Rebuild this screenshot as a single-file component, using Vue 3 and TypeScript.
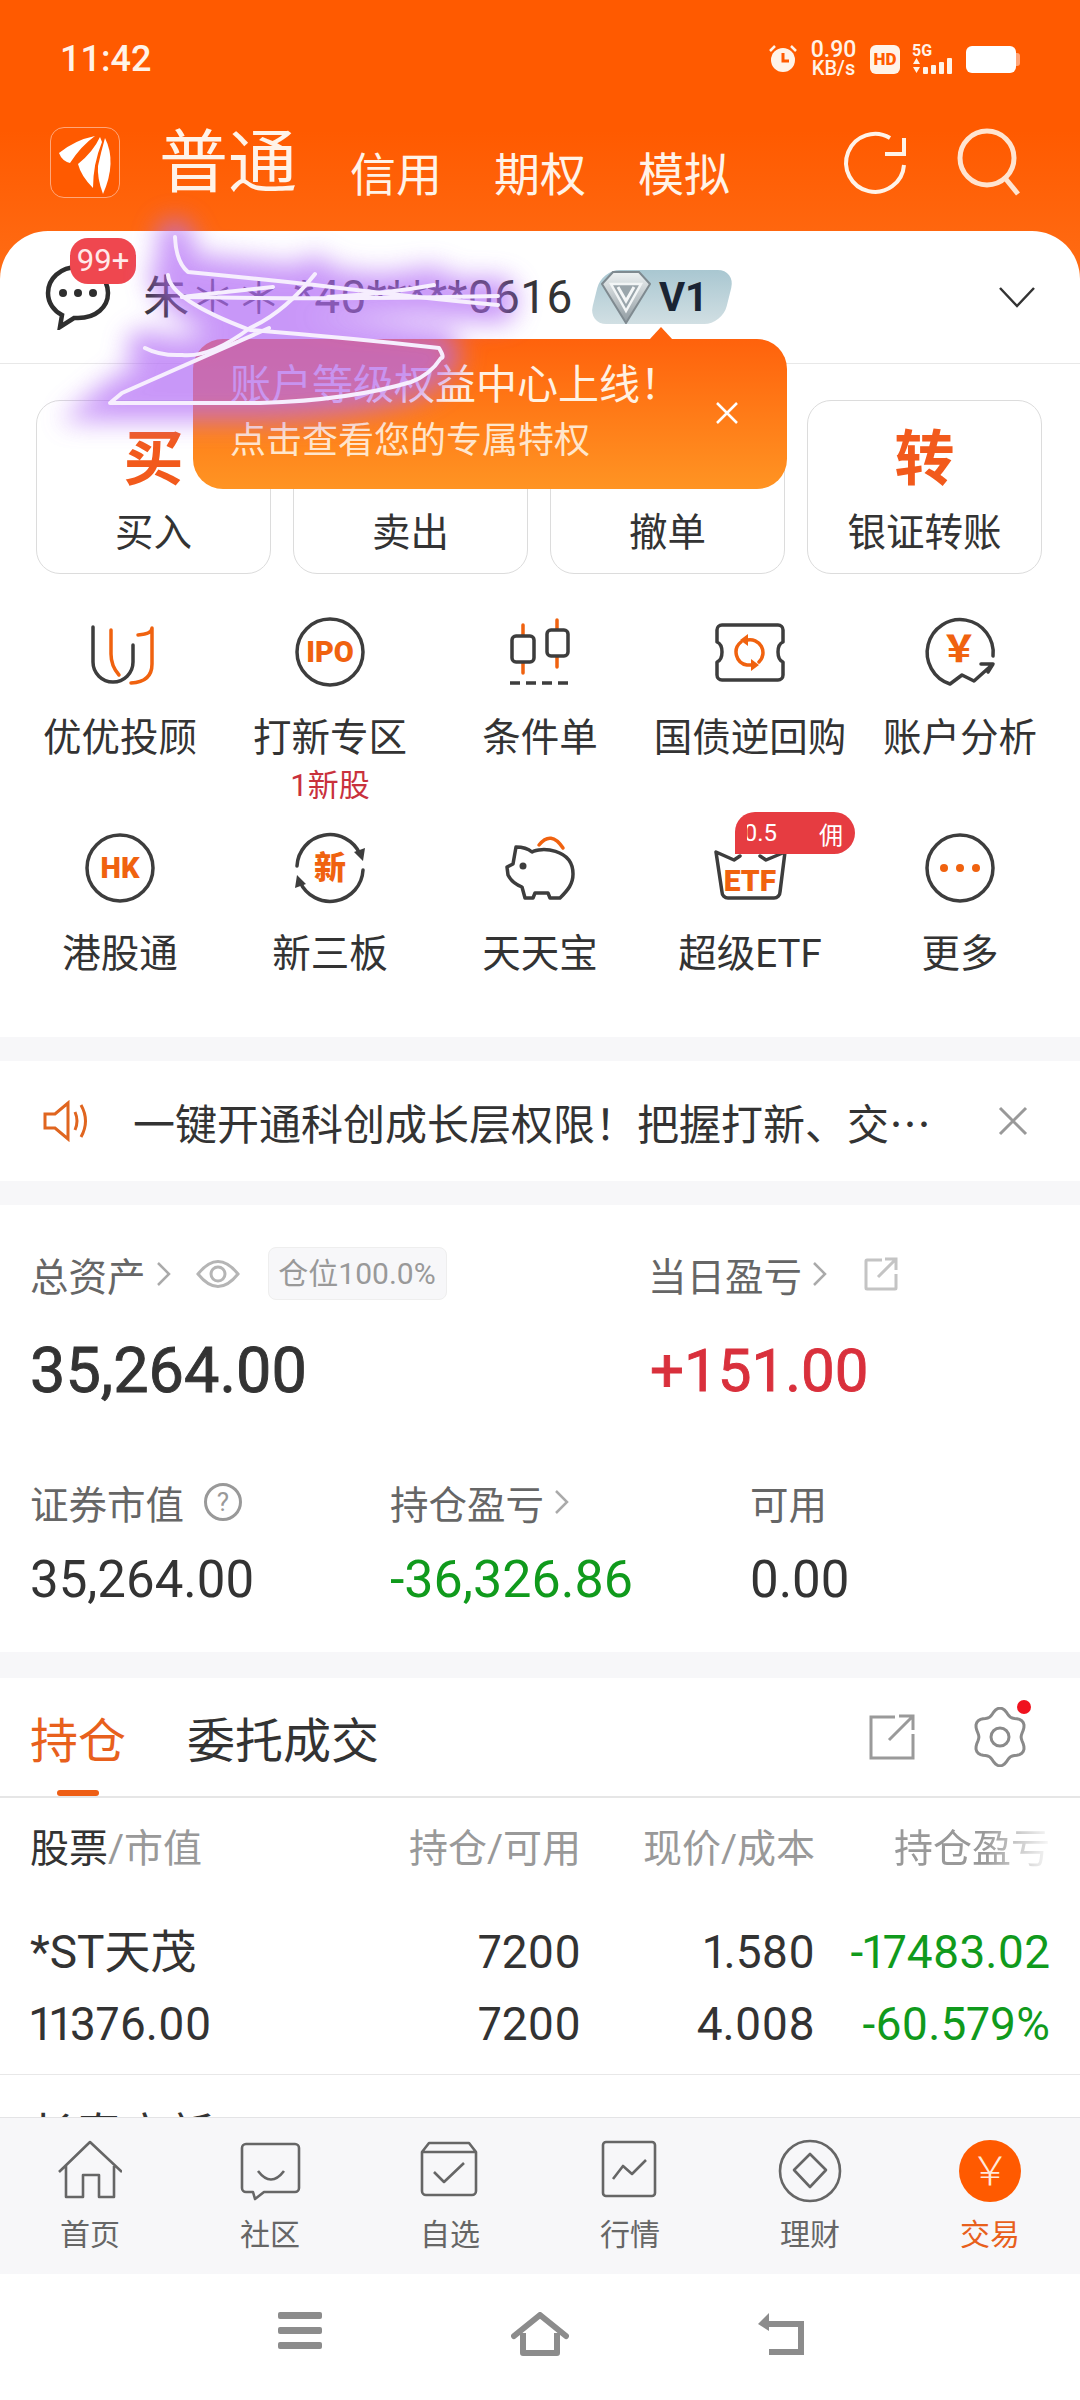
<script setup lang="ts">
const ink = 'stroke="#3d3d3d" stroke-width="3.5" fill="none" stroke-linecap="round" stroke-linejoin="round"'
const hot = 'stroke="#f0620f" stroke-width="3.5" fill="none" stroke-linecap="round" stroke-linejoin="round"'
const bold = 'fill="#f0620f" font-family="Roboto, Noto Sans CJK SC, sans-serif" font-weight="900" text-anchor="middle"'

const icons: Record<string, string> = {
  uu: `<path ${ink} d="M13 15V50a20 20 0 0 0 40 0V33"/><path ${hot} d="M31 18V42Q31 54 39 63"/><path ${hot} d="M58 23Q72 22 72 16V52Q72 70 51 71"/>`,
  ipo: `<circle ${ink} cx="40" cy="40" r="33"/><text ${bold} x="40" y="50" font-size="29">IPO</text>`,
  candle: `<path ${hot} d="M23 13V61M57 8V55"/><rect x="12" y="24" width="22" height="26" rx="4" fill="#fff" stroke="#3d3d3d" stroke-width="3.5"/><rect x="47" y="18" width="21" height="26" rx="4" fill="#fff" stroke="#3d3d3d" stroke-width="3.5"/><path stroke="#3d3d3d" stroke-width="3.5" d="M10 71H70" stroke-dasharray="10 6"/>`,
  ticket: `<path ${ink} d="M12 13H68a5 5 0 0 1 5 5v12q-5 2 -5 10t5 10v13a5 5 0 0 1-5 5H12a5 5 0 0 1-5-5V50q5-2 5-10t-5-10V18a5 5 0 0 1 5-5z"/><path ${hot} stroke-width="5" d="M31 30A13 13 0 0 0 37 53H42M49 50A13 13 0 0 0 37 28"/><path fill="#f0620f" d="M41 47L49 53L41 59ZM38 22L30 28L38 34Z"/>`,
  yen: `<path ${ink} d="M73 44A33 33 0 1 0 30 72L42 63L54 69L73 52H61M73 52L68 60"/><text ${bold} x="39" y="50" font-size="36" font-family="Noto Sans CJK SC">￥</text>`,
  hk: `<circle ${ink} cx="40" cy="40" r="33"/><text ${bold} x="40" y="50" font-size="29">HK</text>`,
  xin: `<path ${ink} d="M7 38A33 33 0 0 1 70 26M73 42A33 33 0 0 1 10 54"/><path fill="#3d3d3d" d="M64 24L75 20L73 33ZM16 56L5 60L7 47Z"/><text ${bold} x="40" y="51" font-size="32">新</text>`,
  pig: `<path ${hot} d="M39 17Q51 2 63 20"/><path ${ink} d="M16 19Q26 19 32 24C40 19 73 20 73 46C73 56 68 62 60 70H50L48 65H35L33 70H25L22 59Q12 55 8 47L7 39L13 36Z"/><circle cx="23" cy="38" r="3.5" fill="#3d3d3d"/>`,
  etf: `<path ${ink} d="M30 28L24 32L6 24L12 64a6 6 0 0 0 6 6H64a6 6 0 0 0 6-6L75 24L56 32L50 28"/><text ${bold} x="40" y="63" font-size="30">ETF</text>`,
  more: `<circle ${ink} cx="40" cy="40" r="33"/><circle cx="24" cy="40" r="4" fill="#f0620f"/><circle cx="40" cy="40" r="4" fill="#f0620f"/><circle cx="56" cy="40" r="4" fill="#f0620f"/>`
}

const actions = [
  { big: '买', label: '买入' },
  { big: '卖', label: '卖出' },
  { big: '撤', label: '撤单' },
  { big: '转', label: '银证转账' }
]

const tools = [
  { icon: 'uu', label: '优优投顾' },
  { icon: 'ipo', label: '打新专区', sub: '1新股' },
  { icon: 'candle', label: '条件单' },
  { icon: 'ticket', label: '国债逆回购' },
  { icon: 'yen', label: '账户分析' },
  { icon: 'hk', label: '港股通' },
  { icon: 'xin', label: '新三板' },
  { icon: 'pig', label: '天天宝' },
  { icon: 'etf', label: '超级ETF', tag: true },
  { icon: 'more', label: '更多' }
]

const rows = [
  { name: '*ST天茂', value: '11376.00', hold: '7200', free: '7200', price: '1.580', cost: '4.008', pnl: '-17483.02', pct: '-60.579%' },
  { name: '长春高新', value: '', hold: '100', free: '', price: '104.000', cost: '', pnl: '-8774.00', pct: '' }
]

const tabs = [
  { label: '首页', icon: '<path d="M1 33L32 3L64 33M8 27V58H25V36H41V58H56V27"/>' },
  { label: '社区', icon: '<path d="M8 5H57a4 4 0 0 1 4 4V49a4 4 0 0 1-4 4H26L17 60L15 53H8a4 4 0 0 1-4-4V9a4 4 0 0 1 4-4Z"/><path d="M20 32Q33 49 46 32"/>' },
  { label: '自选', icon: '<path d="M4 13L11 4H51L58 13V52a4 4 0 0 1-4 4H8a4 4 0 0 1-4-4ZM4 13H58"/><path d="M16 33L26 43L46 24"/>' },
  { label: '行情', icon: '<rect x="5" y="3" width="52" height="54" rx="3"/><path d="M15 40L25 27L34 35L48 21"/>' },
  { label: '理财', icon: '<circle cx="32" cy="32" r="30"/><path d="M32 15L48 31L32 48L16 31Z"/>' }
]

// wavy outline of the settings gear
function gearPath(): string {
  const pts: string[] = []
  for (let i = 0; i < 72; i++) {
    const a = (i / 72) * Math.PI * 2
    const r = 23.5 + 2.8 * Math.cos(a * 6)
    pts.push(`${(30 + r * 1.02 * Math.sin(a)).toFixed(1)} ${(30 - r * 1.1 * Math.cos(a)).toFixed(1)}`)
  }
  return `M${pts.join('L')}Z`
}

const scribble = [
  'M175 237Q176 262 188 272Q250 278 315 285Q420 298 498 305',
  'M182 297Q340 300 498 296',
  'M273 287Q225 292 182 297',
  'M315 274Q285 312 250 328Q210 358 182 355Q160 356 145 348',
  'M434 285Q385 294 328 297',
  'M168 275Q170 300 250 330Q350 338 439 348Q445 358 441 358Q430 375 411 382Q351 400 260 403H110L122 393L269 328'
]
</script>

<template>
  <div class="page">
    <div class="scroll">
      <div class="hero">
        <div class="status">
          <span class="time">11:42</span>
          <div class="status-right">
            <svg width="30" height="30" viewBox="0 0 30 30">
              <circle cx="15" cy="16" r="12" fill="#fff3e8" />
              <path d="M15 9V17H21" stroke="#ff5a00" stroke-width="3" fill="none" />
              <path d="M2 7L7 2M28 7L23 2" stroke="#fff3e8" stroke-width="2.5" />
            </svg>
            <div class="speed"><span>0.90</span><span class="speed-unit">KB/s</span></div>
            <span class="hd">HD</span>
            <div class="signal">
              <span class="five-g">5G</span>
              <div class="bars">
                <svg width="9" height="17" viewBox="0 0 9 17" fill="#fff3e8"><path d="M4.5 1L8 7H1ZM1 10H8L4.5 16Z" /></svg>
                <i /><i /><i /><i />
              </div>
            </div>
            <div class="battery"><i /></div>
          </div>
        </div>

        <div class="nav">
          <div class="logo">
            <svg width="68" height="70" viewBox="0 0 68 70" fill="#fff">
              <path d="M8 25Q24 12 44 8Q30 18 19 35Q11 33 8 25Z" />
              <path d="M49 9Q42 24 27 36Q30 48 42 60Q42 36 51 14Z" />
              <path d="M54 10Q66 34 52 66Q46 50 47 38Q50 24 54 10Z" />
            </svg>
          </div>
          <span class="nav-main">普通</span>
          <div class="nav-tabs">
            <span>信用</span>
            <span>期权</span>
            <span>模拟</span>
          </div>
          <div class="nav-icons">
            <svg width="70" height="70" viewBox="0 0 70 70" fill="none" stroke="#fff3e8" stroke-width="4">
              <path d="M50 10A29 29 0 1 0 64 37" />
              <path d="M64 10V26H45" />
            </svg>
            <svg width="66" height="70" viewBox="0 0 66 70" fill="none" stroke="#ffe4d0" stroke-width="5">
              <circle cx="31" cy="30" r="27" />
              <path d="M49 50L62 66" />
            </svg>
          </div>
        </div>

        <div class="account">
          <div class="chat">
            <svg width="66" height="66" viewBox="0 0 66 66" fill="none" stroke="#2e2e2e" stroke-width="4.5">
              <path d="M33 3C15 3 3 15 3 29C3 39 9 47 17 51L15 63L29 54H33C51 54 63 43 63 29C63 15 51 3 33 3Z" />
              <circle cx="18" cy="29" r="4" fill="#2e2e2e" stroke="none" />
              <circle cx="33" cy="29" r="4" fill="#2e2e2e" stroke="none" />
              <circle cx="48" cy="29" r="4" fill="#2e2e2e" stroke="none" />
            </svg>
            <span class="chat-badge">99+</span>
          </div>
          <span class="acct-name">朱＊＊ *40*****0616</span>
          <div class="level">
            <svg width="50" height="54" viewBox="0 0 50 54">
              <defs>
                <linearGradient id="gem" x1="0" y1="0" x2="0" y2="1">
                  <stop offset="0" stop-color="#eef2f3" />
                  <stop offset="1" stop-color="#8f9aa0" />
                </linearGradient>
              </defs>
              <path d="M12 2H38L49 14L25 53L1 14Z" fill="url(#gem)" stroke="#7f8a90" stroke-width="2" />
              <path d="M10 14H40L25 41Z" fill="#9aa5ab" stroke="#f2f5f6" stroke-width="2.5" />
              <path d="M17 17L25 31L33 17" fill="none" stroke="#f4f6f7" stroke-width="3" />
            </svg>
            <span>V1</span>
          </div>
          <svg class="chevron" width="38" height="24" viewBox="0 0 38 24" fill="none" stroke="#333" stroke-width="2.5">
            <path d="M2 3L19 21L36 3" />
          </svg>
        </div>
      </div>

      <div class="actions">
        <div v-for="a in actions" :key="a.label" class="action">
          <span class="action-big">{{ a.big }}</span>
          <span class="action-label">{{ a.label }}</span>
        </div>
      </div>

      <div class="tools">
        <div v-for="t in tools" :key="t.label" class="tool">
          <svg width="80" height="80" viewBox="0 0 80 80" v-html="icons[t.icon]" />
          <span class="tool-label">{{ t.label }}</span>
          <span v-if="t.sub" class="tool-sub">{{ t.sub }}</span>
          <div v-if="t.tag" class="tool-tag">
            <span class="tool-tag-num">0.5</span>
            <span>佣</span>
          </div>
        </div>
      </div>

      <div class="gap" />

      <div class="notice">
        <svg width="48" height="42" viewBox="0 0 48 42" fill="none" stroke="#e0651f" stroke-width="3">
          <path d="M2 14H12L25 3V39L12 28H2Z" />
          <path d="M32 12Q36 21 32 30M38 5Q47 21 38 37" />
        </svg>
        <span class="notice-text">一键开通科创成长层权限！把握打新、交…</span>
        <svg width="30" height="30" viewBox="0 0 30 30" stroke="#999" stroke-width="3">
          <path d="M2 2L28 28M28 2L2 28" />
        </svg>
      </div>

      <div class="gap" />

      <div class="assets">
        <div class="assets-top">
          <div class="a-label">
            <span>总资产</span>
            <svg class="arrow" width="16" height="26" viewBox="0 0 16 26" fill="none" stroke="#aaa" stroke-width="2.5"><path d="M2 2L13 13L2 24" /></svg>
            <svg class="eye" width="44" height="34" viewBox="0 0 44 34" fill="none" stroke="#b5b5b5" stroke-width="3">
              <path d="M2 17Q22 -8 42 17Q22 42 2 17Z" />
              <circle cx="22" cy="17" r="7" />
            </svg>
            <span class="ratio">仓位100.0%</span>
          </div>
          <div class="a-label">
            <span>当日盈亏</span>
            <svg class="arrow" width="16" height="26" viewBox="0 0 16 26" fill="none" stroke="#aaa" stroke-width="2.5"><path d="M2 2L13 13L2 24" /></svg>
            <svg class="share" width="34" height="34" viewBox="0 0 34 34" fill="none" stroke="#c4c4c4" stroke-width="3">
              <path d="M18 3H3A1 1 0 0 0 2 4V31A1 1 0 0 0 3 32H31A1 1 0 0 0 32 31V17" />
              <path d="M14 20L32 2M21 2H32V13" />
            </svg>
          </div>
          <div class="a-big">35,264.00</div>
          <div class="a-big red">+151.00</div>
        </div>
        <div class="assets-bottom">
          <div class="a-label">
            <span>证券市值</span>
            <span class="help">?</span>
          </div>
          <div class="a-label">
            <span>持仓盈亏</span>
            <svg class="arrow" width="16" height="26" viewBox="0 0 16 26" fill="none" stroke="#aaa" stroke-width="2.5"><path d="M2 2L13 13L2 24" /></svg>
          </div>
          <div class="a-label"><span>可用</span></div>
          <div class="a-mid">35,264.00</div>
          <div class="a-mid green">-36,326.86</div>
          <div class="a-mid">0.00</div>
        </div>
      </div>

      <div class="gap gap-tall" />

      <div class="hold-tabs">
        <span class="hold-tab on">持仓</span>
        <span class="hold-tab">委托成交</span>
        <svg class="hold-share" width="46" height="46" viewBox="0 0 46 46" fill="none" stroke="#9a9a9a" stroke-width="3">
          <path d="M26 3H2V44H44V20" />
          <path d="M20 26L44 2M30 2H44V16" />
        </svg>
        <div class="gear">
          <svg width="60" height="60" viewBox="0 0 60 60" fill="none" stroke="#8a8a8a" stroke-width="3">
            <path :d="gearPath()" />
            <circle cx="30" cy="30" r="9" />
          </svg>
          <i class="gear-dot" />
        </div>
      </div>

      <div class="table-head">
        <span><b>股票</b>/市值</span>
        <span class="num">持仓/可用</span>
        <span class="num">现价/成本</span>
        <span class="num fade">持仓盈亏</span>
      </div>
      <div v-for="r in rows" :key="r.name" class="table-row">
        <span>{{ r.name }}</span>
        <span class="num">{{ r.hold }}</span>
        <span class="num">{{ r.price }}</span>
        <span class="num green">{{ r.pnl }}</span>
        <span>{{ r.value }}</span>
        <span class="num">{{ r.free }}</span>
        <span class="num">{{ r.cost }}</span>
        <span class="num green">{{ r.pct }}</span>
      </div>
    </div>

    <div class="tabbar">
      <div v-for="t in tabs" :key="t.label" class="tabbar-item">
        <svg width="64" height="64" viewBox="0 0 64 64" fill="none" stroke="#666" stroke-width="2.6" stroke-linejoin="round" v-html="t.icon" />
        <span>{{ t.label }}</span>
      </div>
      <div class="tabbar-item active">
        <svg width="64" height="64" viewBox="0 0 64 64">
          <circle cx="32" cy="32" r="31" fill="#ff5a00" />
          <text x="32" y="46" fill="#ffe9dc" font-size="40" font-weight="300" text-anchor="middle" font-family="Noto Sans CJK SC, sans-serif">￥</text>
        </svg>
        <span>交易</span>
      </div>
    </div>

    <div class="sysbar">
      <div class="sys-cell">
        <svg width="46" height="38" viewBox="0 0 46 38" fill="#8c8c8c">
          <rect x="1" y="0" width="44" height="7" rx="2" />
          <rect x="1" y="15" width="44" height="7" rx="2" />
          <rect x="1" y="30" width="44" height="7" rx="2" />
        </svg>
      </div>
      <div class="sys-cell">
        <svg width="58" height="44" viewBox="0 0 58 44" fill="none" stroke="#8c8c8c" stroke-width="6" stroke-linejoin="round">
          <path d="M3 24L29 3L55 24" stroke-linecap="round" />
          <path d="M12 21V41H46V21" />
        </svg>
      </div>
      <div class="sys-cell">
        <svg width="50" height="44" viewBox="0 0 50 44" fill="none" stroke="#8c8c8c" stroke-width="6">
          <path d="M8 12H46V40H14" />
          <path d="M14 1L3 12L14 19Z" fill="#8c8c8c" stroke="none" />
        </svg>
      </div>
    </div>

    <div class="tip">
      <div class="tip-title">账户等级权益中心上线！</div>
      <div class="tip-sub">点击查看您的专属特权</div>
      <svg class="tip-close" width="24" height="24" viewBox="0 0 24 24" stroke="#fff" stroke-width="2.5">
        <path d="M2 2L22 22M22 2L2 22" />
      </svg>
    </div>

    <svg class="scribble" width="1080" height="640" viewBox="0 0 1080 640" fill="none">
      <defs>
        <filter id="glow" x="-30%" y="-30%" width="160%" height="160%">
          <feGaussianBlur stdDeviation="13" />
        </filter>
      </defs>
      <g filter="url(#glow)" stroke="#b26cf6" stroke-width="36" opacity="0.7" stroke-linecap="round">
        <path v-for="d in scribble" :key="d" :d="d" />
        <path :d="scribble[5]" fill="#b26cf6" />
      </g>
      <g stroke="#f6eefe" stroke-width="4" stroke-linecap="round" stroke-linejoin="round">
        <path v-for="d in scribble" :key="d" :d="d" />
      </g>
    </svg>
  </div>
</template>

<style scoped>
.page {
  position: relative;
  width: 1080px;
  height: 2400px;
  display: flex;
  flex-direction: column;
  overflow: hidden;
  background: #fff;
  color: #333;
  font-family: Roboto, "Noto Sans CJK SC", sans-serif;
}

.scroll {
  flex: 1;
  min-height: 0;
  overflow: hidden;
}

.hero {
  background: linear-gradient(180deg, #ff5a00 0, #ff5a00 130px, #ff6f18 300px);
}

.status {
  height: 110px;
  display: flex;
  align-items: center;
  justify-content: space-between;
  padding: 8px 60px 0;
  box-sizing: border-box;
  color: #fff3e8;
}

.time {
  font-size: 36px;
  font-weight: 500;
}

.status-right {
  display: flex;
  align-items: center;
}

.speed {
  display: flex;
  flex-direction: column;
  align-items: center;
  width: 47px;
  margin-left: 12px;
  font-size: 23px;
  line-height: 19px;
  font-weight: 500;
}

.speed-unit {
  font-size: 20px;
}

.hd {
  margin-left: 13px;
  width: 30px;
  height: 29px;
  border-radius: 6px;
  background: #fff3e8;
  color: #ff5a00;
  font-size: 17px;
  font-weight: 900;
  line-height: 29px;
  text-align: center;
}

.signal {
  margin-left: 12px;
  display: flex;
  flex-direction: column;
  width: 43px;
}

.five-g {
  font-size: 16px;
  line-height: 13px;
  font-weight: 700;
}

.bars {
  display: flex;
  align-items: flex-end;
  gap: 3px;
  height: 17px;
}

.bars svg {
  margin-right: -1px;
}

.bars i {
  width: 5px;
  background: #fff3e8;
  border-radius: 1px;
}

.bars i:nth-of-type(1) { height: 7px; }
.bars i:nth-of-type(2) { height: 9px; }
.bars i:nth-of-type(3) { height: 12px; }
.bars i:nth-of-type(4) { height: 16px; }

.battery {
  margin-left: 11px;
  margin-right: 4px;
  width: 50px;
  height: 27px;
  border-radius: 6px;
  background: #fff;
  position: relative;
}

.battery i {
  position: absolute;
  right: -4px;
  top: 7px;
  width: 4px;
  height: 13px;
  border-radius: 0 3px 3px 0;
  background: #ffa67a;
}

.nav {
  display: flex;
  align-items: flex-end;
  padding: 17px 0 33px 50px;
  height: 121px;
  box-sizing: border-box;
  color: #fff3e8;
}

.logo {
  width: 70px;
  height: 71px;
  box-sizing: border-box;
  border: 1px solid #ffa77a;
  border-radius: 14px;
  background: #ff5a00;
}

.nav-main {
  margin-left: 39px;
  font-size: 69px;
  line-height: 68px;
}

.nav-tabs {
  margin-left: 53px;
  display: flex;
  gap: 52px;
  font-size: 46px;
  line-height: 46px;
}

.nav-icons {
  margin-left: auto;
  margin-right: 58px;
  display: flex;
  align-items: flex-end;
  gap: 46px;
}

.account {
  height: 133px;
  box-sizing: border-box;
  display: flex;
  align-items: center;
  padding: 0 44px 0 45px;
  background: #fff;
  border-radius: 48px 48px 0 0;
  border-bottom: 1px solid #e8e8e8;
}

.chat {
  position: relative;
  height: 66px;
}

.chat-badge {
  position: absolute;
  left: 25px;
  top: -26px;
  width: 66px;
  height: 46px;
  border-radius: 18px;
  background: #ef474f;
  color: #ffe9ea;
  font-size: 31px;
  line-height: 46px;
  text-align: center;
}

.acct-name {
  margin-left: 32px;
  font-size: 46px;
  line-height: 60px;
  letter-spacing: 0.4px;
  color: #333;
  white-space: nowrap;
}

.level {
  margin-left: 22px;
  width: 134px;
  height: 54px;
  display: flex;
  align-items: center;
  gap: 8px;
  padding-left: 6px;
  box-sizing: border-box;
  border-radius: 18px;
  transform: skewX(-14deg);
  background: linear-gradient(180deg, #a9c7d1, #d1dfe3);
  color: #1a2433;
  font-size: 40px;
  font-weight: 700;
}

.level svg,
.level span {
  transform: skewX(14deg);
}

.chevron {
  margin-left: auto;
}

.actions {
  display: grid;
  grid-template-columns: repeat(4, 235px);
  gap: 22px;
  padding: 36px 0 0 36px;
}

.action {
  height: 174px;
  box-sizing: border-box;
  border: 1px solid #dcdcdc;
  border-radius: 24px;
  display: flex;
  flex-direction: column;
  align-items: center;
  padding-top: 24px;
}

.action-big {
  font-size: 60px;
  line-height: 70px;
  font-weight: 700;
  color: #f25a1c;
}

.action-label {
  margin-top: 13px;
  font-size: 38.5px;
  line-height: 50px;
  color: #333;
}

.tools {
  display: grid;
  grid-template-columns: repeat(5, 210px);
  grid-template-rows: 216px 209px;
  padding: 38px 15px 0;
}

.tool {
  position: relative;
  display: flex;
  flex-direction: column;
  align-items: center;
}

.tool svg {
  display: block;
}

.tool-label {
  margin-top: 21px;
  font-size: 38.5px;
  line-height: 50px;
  color: #333;
  white-space: nowrap;
}

.tool-sub {
  margin-top: 3px;
  font-size: 31px;
  line-height: 40px;
  color: #c9313c;
}

.tool-tag {
  position: absolute;
  left: 90px;
  top: -16px;
  width: 120px;
  height: 42px;
  display: flex;
  align-items: center;
  justify-content: space-between;
  padding: 0 12px;
  box-sizing: border-box;
  border-radius: 20px 21px 21px 0;
  background: #e63c41;
  color: #fff;
  font-size: 24px;
}

.tool-tag-num {
  width: 30px;
  display: flex;
  justify-content: flex-end;
  overflow: hidden;
}

.gap {
  height: 24px;
  background: #f7f7f9;
}

.gap-tall {
  height: 26px;
}

.notice {
  height: 120px;
  display: flex;
  align-items: center;
  padding: 0 52px 0 43px;
}

.notice-text {
  margin: 0 auto 0 42px;
  font-family: "Noto Sans CJK SC", sans-serif;
  font-size: 42px;
  white-space: nowrap;
  color: #333;
}

.assets {
  padding: 42px 0 0 30px;
  height: 447px;
  box-sizing: border-box;
}

.assets-top {
  display: grid;
  grid-template-columns: 618px 1fr;
  grid-template-rows: 53px 70px;
  row-gap: 36px;
}

.assets-bottom {
  margin-top: 71px;
  display: grid;
  grid-template-columns: repeat(3, 360px);
  grid-template-rows: 50px 70px;
  row-gap: 18px;
}

.a-label {
  display: flex;
  align-items: center;
  font-size: 38.5px;
  color: #666;
}

.arrow {
  margin-left: 10px;
}

.eye {
  margin-left: 24px;
}

.share {
  margin-left: 36px;
}

.ratio {
  margin-left: 28px;
  width: 179px;
  height: 53px;
  box-sizing: border-box;
  border: 1px solid #eee;
  border-radius: 8px;
  background: #f7f7f9;
  color: #999;
  font-size: 30px;
  line-height: 51px;
  text-align: center;
  white-space: nowrap;
}

.help {
  margin-left: 20px;
  width: 38px;
  height: 38px;
  box-sizing: border-box;
  border: 3px solid #999;
  border-radius: 50%;
  color: #999;
  font-size: 26px;
  line-height: 32px;
  text-align: center;
}

.a-big {
  font-size: 63px;
  line-height: 70px;
  color: #333;
  -webkit-text-stroke: 0.9px currentColor;
}

.a-mid {
  font-size: 51px;
  line-height: 70px;
  color: #333;
}

.a-mid.green {
  font-size: 52px;
}

.a-big.red {
  font-size: 60px;
  padding-left: 2px;
}

.red {
  color: #d9303c;
}

.green {
  color: #109a1c;
}

.hold-tabs {
  height: 120px;
  box-sizing: border-box;
  display: flex;
  align-items: center;
  padding: 0 50px 0 30px;
  border-bottom: 2px solid #e6e6e6;
  font-size: 48px;
}

.hold-tab {
  position: relative;
  margin-right: 61px;
}

.hold-tab.on {
  color: #e8601c;
}

.hold-tab.on::after {
  content: "";
  position: absolute;
  left: 27px;
  bottom: -24px;
  width: 42px;
  height: 6px;
  border-radius: 3px;
  background: #ee5e14;
}

.hold-share {
  margin-left: auto;
  margin-right: 55px;
}

.gear {
  position: relative;
  height: 60px;
}

.gear-dot {
  position: absolute;
  right: -1px;
  top: -7px;
  width: 14px;
  height: 14px;
  border-radius: 50%;
  background: #f0121e;
}

.table-head,
.table-row {
  display: grid;
  grid-template-columns: 370px 181px 234px 235px;
  padding-left: 30px;
}

.table-head {
  height: 100px;
  box-sizing: border-box;
  padding-bottom: 6px;
  align-items: center;
  font-size: 39px;
  color: #999;
}

.table-head b {
  font-weight: 400;
  color: #333;
}

.num {
  text-align: right;
}

.fade {
  -webkit-mask-image: linear-gradient(90deg, #000 72%, transparent 102%);
  mask-image: linear-gradient(90deg, #000 72%, transparent 102%);
}

.table-row {
  box-sizing: border-box;
  height: 177px;
  padding-top: 18px;
  grid-auto-rows: 72px;
  align-content: start;
  font-size: 46px;
  line-height: 72px;
  font-variant-numeric: proportional-nums;
  color: #333;
  border-bottom: 1px solid #e8e8e8;
}

.table-row + .table-row {
  padding-top: 24px;
}

.tabbar {
  height: 157px;
  box-sizing: border-box;
  display: grid;
  grid-template-columns: repeat(6, 180px);
  background: #f7f7f9;
  border-top: 1px solid #e4e4e6;
}

.tabbar-item {
  display: flex;
  flex-direction: column;
  align-items: center;
  padding-top: 21px;
  font-size: 30px;
  line-height: 40px;
  color: #666;
}

.tabbar-item svg {
  margin-bottom: 12px;
}

.tabbar-item.active {
  color: #e8601c;
}

.sysbar {
  height: 126px;
  display: flex;
  justify-content: center;
  background: #fff;
}

.sys-cell {
  width: 240px;
  display: flex;
  justify-content: center;
  padding-top: 38px;
}

.tip {
  position: absolute;
  left: 193px;
  top: 339px;
  width: 594px;
  height: 150px;
  box-sizing: border-box;
  padding: 21px 0 0 37px;
  border-radius: 30px;
  background: linear-gradient(180deg, #ff620c, #ff9423);
  color: #fff1e2;
}

.tip::before {
  content: "";
  position: absolute;
  left: 456px;
  top: -12px;
  border-left: 12px solid transparent;
  border-right: 12px solid transparent;
  border-bottom: 13px solid #ff620c;
}

.tip-title {
  font-size: 41px;
  line-height: 50px;
  white-space: nowrap;
}

.tip-sub {
  margin-top: 6px;
  font-size: 36px;
  line-height: 50px;
  white-space: nowrap;
  color: #ffe6cc;
}

.tip-close {
  position: absolute;
  right: 48px;
  top: 62px;
}

.scribble {
  position: absolute;
  left: 0;
  top: 0;
  pointer-events: none;
}
</style>
